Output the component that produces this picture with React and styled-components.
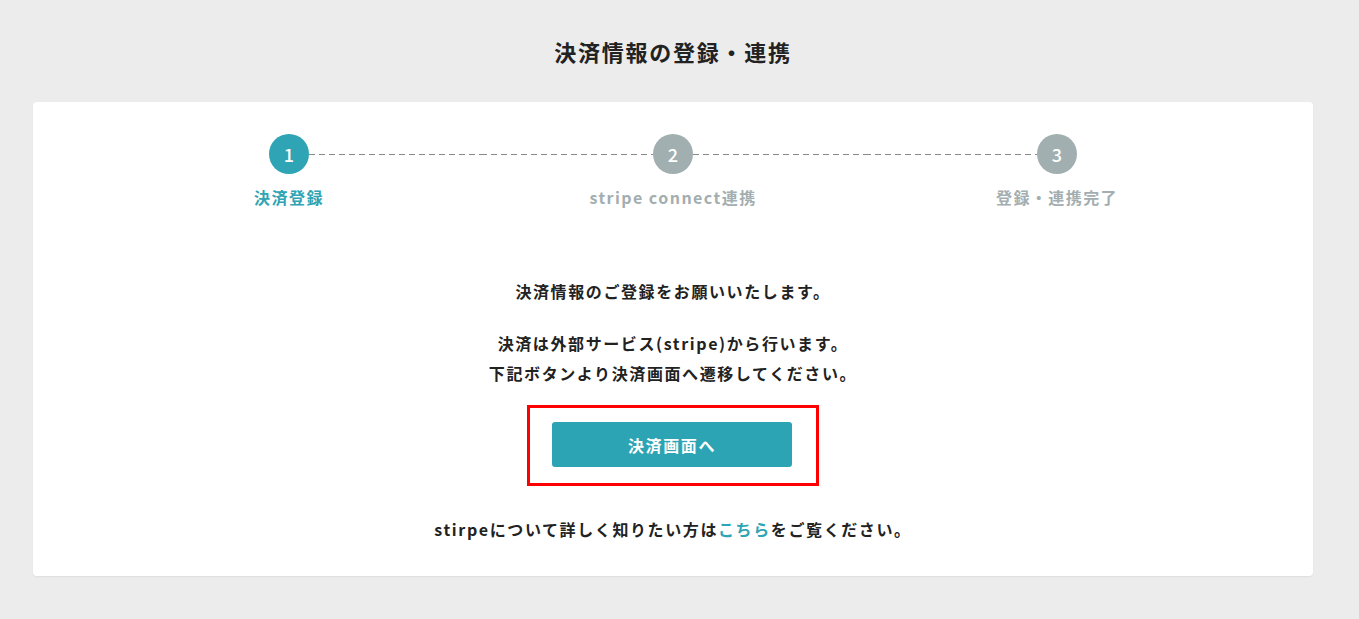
import React from 'react';
import styled, { createGlobalStyle } from 'styled-components';

const GlobalStyle = createGlobalStyle`
  html, body {
    margin: 0;
    padding: 0;
    background: #ececec;
  }
  body {
    font-family: "Noto Sans CJK JP", "Noto Sans", sans-serif;
    color: #222;
  }
`;

const Page = styled.main`
  min-height: 619px;
  padding: 37px 46px 40px 33px;
  box-sizing: border-box;
`;

const Title = styled.h1`
  margin: 0 0 37px;
  text-align: center;
  font-size: 22px;
  line-height: 28px;
  font-weight: 700;
  letter-spacing: 0.08em;
  color: #222;
`;

const Card = styled.section`
  background: #fff;
  border-radius: 4px;
  box-shadow: 0 1px 2px rgba(0, 0, 0, 0.06);
  padding: 32px 64px 35px;
  display: flex;
  flex-direction: column;
  align-items: center;
`;

const Steps = styled.ol`
  list-style: none;
  margin: 0;
  padding: 0;
  width: 100%;
  display: grid;
  grid-template-columns: repeat(3, 1fr);
`;

const Step = styled.li`
  display: flex;
  flex-direction: column;
  align-items: center;
`;

const CircleRow = styled.div`
  width: 100%;
  display: flex;
  align-items: center;
`;

const Line = styled.span`
  flex: 1;
  height: 1px;
  background: ${({ $hidden }) =>
    $hidden ? 'transparent' : 'repeating-linear-gradient(to right, #8a8a8a 0 6px, transparent 6px 10px)'};
`;

const Circle = styled.span`
  width: 40px;
  height: 40px;
  border-radius: 50%;
  flex-shrink: 0;
  display: flex;
  align-items: center;
  justify-content: center;
  background: ${({ $active }) => ($active ? '#2ea4b4' : '#a2afb0')};
  color: #fff;
  font-size: 18px;
  font-weight: 500;
`;

const StepLabel = styled.span`
  margin-top: 11px;
  font-size: 16px;
  line-height: 24px;
  font-weight: 700;
  letter-spacing: 0.09em;
  color: ${({ $active }) => ($active ? '#2ea4b4' : '#a3aeb0')};
`;

const Message = styled.p`
  margin: ${({ $first }) => ($first ? '67px 0 0' : '22px 0 0')};
  text-align: center;
  font-size: 16px;
  line-height: 30px;
  font-weight: 700;
  letter-spacing: 0.1em;
`;

const Highlight = styled.div`
  margin-top: 17px;
  border: 3px solid #f00;
  padding: 14px 24px 16px 22px;
`;

const Button = styled.button`
  display: block;
  width: 240px;
  height: 45px;
  border: none;
  border-radius: 3px;
  background: #2da4b4;
  color: #fff;
  font-family: "Noto Sans CJK JP", "Noto Sans", sans-serif;
  font-size: 16px;
  font-weight: 700;
  letter-spacing: 0.1em;
  cursor: pointer;
`;

const Footer = styled.p`
  margin: 31px 0 0;
  font-size: 16px;
  line-height: 24px;
  font-weight: 700;
  letter-spacing: 0.1em;
  text-align: center;
`;

const Link = styled.a`
  color: #2ea4b4;
  text-decoration: none;
`;

const steps = ['決済登録', 'stripe connect連携', '登録・連携完了'];

const App = () => (
  <>
    <GlobalStyle />
    <Page>
      <Title>決済情報の登録・連携</Title>
      <Card>
        <Steps>
          {steps.map((label, i) => (
            <Step key={label}>
              <CircleRow>
                <Line $hidden={i === 0} />
                <Circle $active={i === 0}>{i + 1}</Circle>
                <Line $hidden={i === steps.length - 1} />
              </CircleRow>
              <StepLabel $active={i === 0}>{label}</StepLabel>
            </Step>
          ))}
        </Steps>
        <Message $first>決済情報のご登録をお願いいたします。</Message>
        <Message>
          決済は外部サービス(stripe)から行います。
          <br />
          下記ボタンより決済画面へ遷移してください。
        </Message>
        <Highlight>
          <Button type="button">決済画面へ</Button>
        </Highlight>
        <Footer>
          stirpeについて詳しく知りたい方は<Link href="#">こちら</Link>をご覧ください。
        </Footer>
      </Card>
    </Page>
  </>
);

export default App;
